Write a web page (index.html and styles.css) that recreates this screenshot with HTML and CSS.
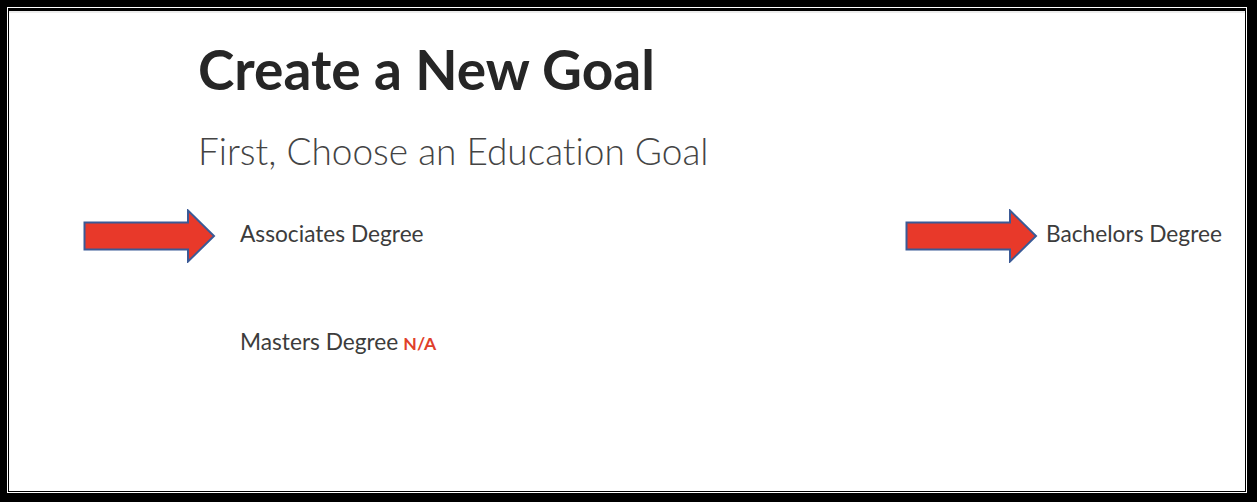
FILE: index.html
```html
<!DOCTYPE html>
<html>
<head>
    <title>Create a New Goal</title>
    <link rel="stylesheet" href="styles.css">
</head>
<body>
    <div class="frame">
        <div class="sheet">
            <h1>Create a New Goal</h1>
            <h2>First, Choose an Education Goal</h2>

            <div class="goal-options">
                <div class="goal-option">
                    <svg class="pointer" width="133" height="54" viewBox="0 0 133 54">
                        <path d="M1.5 13.5 H105 V1.5 L131 27 L105 52.5 V40.5 H1.5 Z" fill="#e8392a" stroke="#3b5a96" stroke-width="2"/>
                    </svg>
                    <span>Associates Degree</span>
                </div>
                <div class="goal-option">
                    <svg class="pointer pointer-near" width="133" height="54" viewBox="0 0 133 54">
                        <path d="M1.5 13.5 H105 V1.5 L131 27 L105 52.5 V40.5 H1.5 Z" fill="#e8392a" stroke="#3b5a96" stroke-width="2"/>
                    </svg>
                    <span>Bachelors Degree</span>
                </div>
                <div class="goal-option">
                    <span>Masters Degree</span>
                    <span class="badge">N/A</span>
                </div>
            </div>
        </div>
    </div>
</body>
</html>
```

FILE: styles.css
```css
html, body {
    height: 100%;
}

body {
    margin: 0;
    padding: 7px 10px 9px 7px;
    box-sizing: border-box;
    background-color: #000;
    font-family: Lato, 'Open Sans', sans-serif;
    font-variant-ligatures: none;
    color: #333;
}

.frame {
    height: 100%;
    box-sizing: border-box;
    border: 1px solid #fff;
}

.sheet {
    height: 100%;
    box-sizing: border-box;
    border: 1px solid #000;
    border-top: 3px solid #000;
    background-color: #fff;
    box-shadow: inset 0 2px 0 #ececec;
    padding: 26px 0 0 189px;
}

h1 {
    margin: 0;
    font-size: 55px;
    font-weight: 700;
    line-height: 64px;
    color: #262626;
}

h2 {
    margin: 28px 0 0 0;
    font-size: 37px;
    font-weight: 300;
    line-height: 44px;
    color: #444;
}

.goal-options {
    display: grid;
    grid-template-columns: 806px 1fr;
    row-gap: 80px;
    margin-top: 47px;
    padding-left: 42px;
}

.goal-option {
    position: relative;
    display: flex;
    align-items: baseline;
    gap: 5px;
    font-size: 22.7px;
    line-height: 28px;
    color: #3c3c3c;
}

/* callout arrow sits to the left of the label */
.pointer {
    position: absolute;
    right: calc(100% + 24px);
    top: -11px;
}

.pointer-near {
    right: calc(100% + 8px);
}

.badge {
    font-size: 17.6px;
    font-weight: 700;
    color: #e0402a;
}
```
